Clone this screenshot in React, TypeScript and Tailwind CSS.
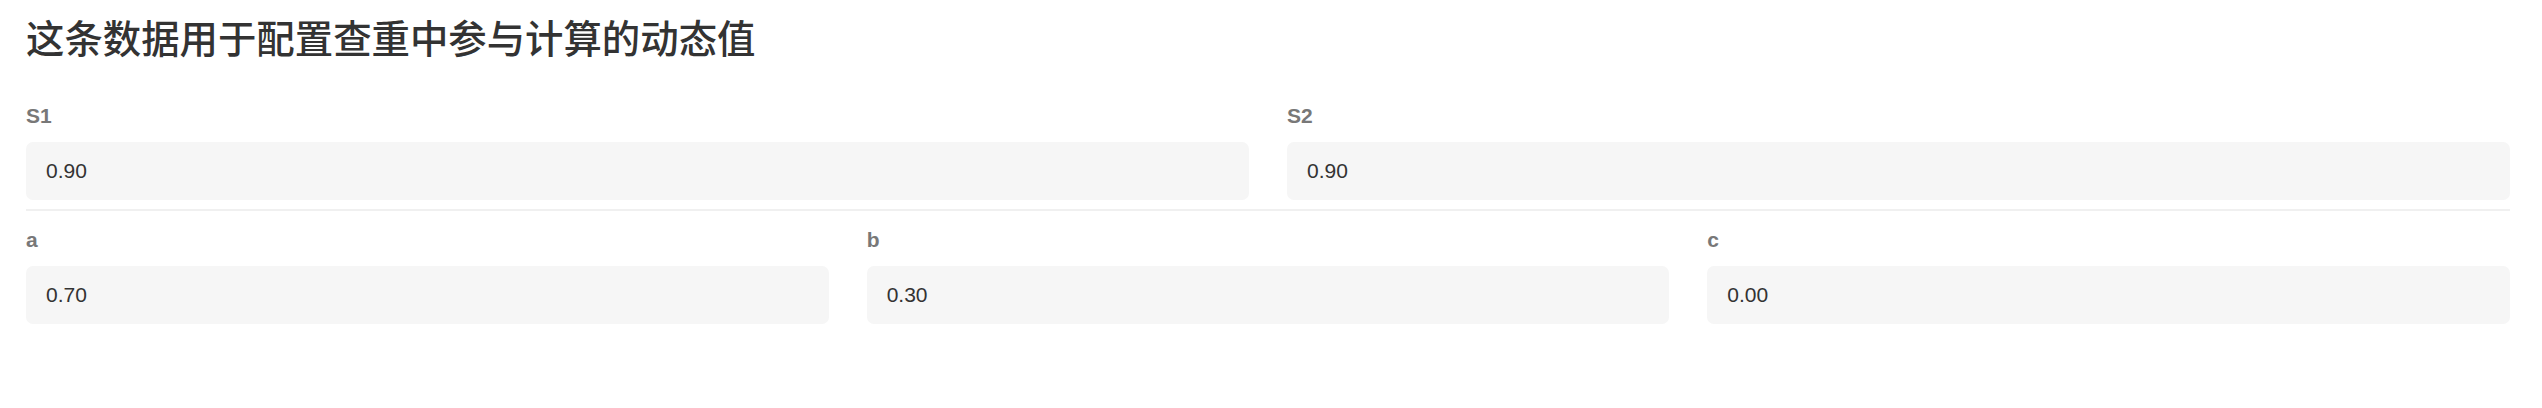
import React from "react";

const Field = ({ label, value }: { label: string; value: string }) => (
  <div className="flex flex-col min-w-0">
    <div
      className="text-[21px] leading-[32px] font-bold text-[#787878] mb-[10px]"
      style={{ fontFamily: '"Liberation Sans", Arial, sans-serif' }}
    >
      {label}
    </div>
    <div
      className="h-[58px] rounded-[7px] bg-[#f6f6f6] flex items-center pl-[20px] text-[21px] text-[#333333]"
      style={{ fontFamily: '"Liberation Sans", Arial, sans-serif' }}
    >
      {value}
    </div>
  </div>
);

export default function App() {
  return (
    <div className="w-full h-[408px] bg-white pl-[26px] pr-[32px] pt-[8px]">
      <h1
        className="text-[38.4px] leading-[57px] font-medium text-[#333333] mb-[35px]"
        style={{ fontFamily: '"Noto Sans CJK SC", "Noto Sans", sans-serif' }}
      >
        这条数据用于配置查重中参与计算的动态值
      </h1>
      <div className="grid grid-cols-2 gap-x-[38px]">
        <Field label="S1" value="0.90" />
        <Field label="S2" value="0.90" />
      </div>
      <div className="h-[2px] bg-[#f0f0f0] mt-[9px] mb-[13px]" />
      <div className="grid grid-cols-3 gap-x-[38px]">
        <Field label="a" value="0.70" />
        <Field label="b" value="0.30" />
        <Field label="c" value="0.00" />
      </div>
    </div>
  );
}
